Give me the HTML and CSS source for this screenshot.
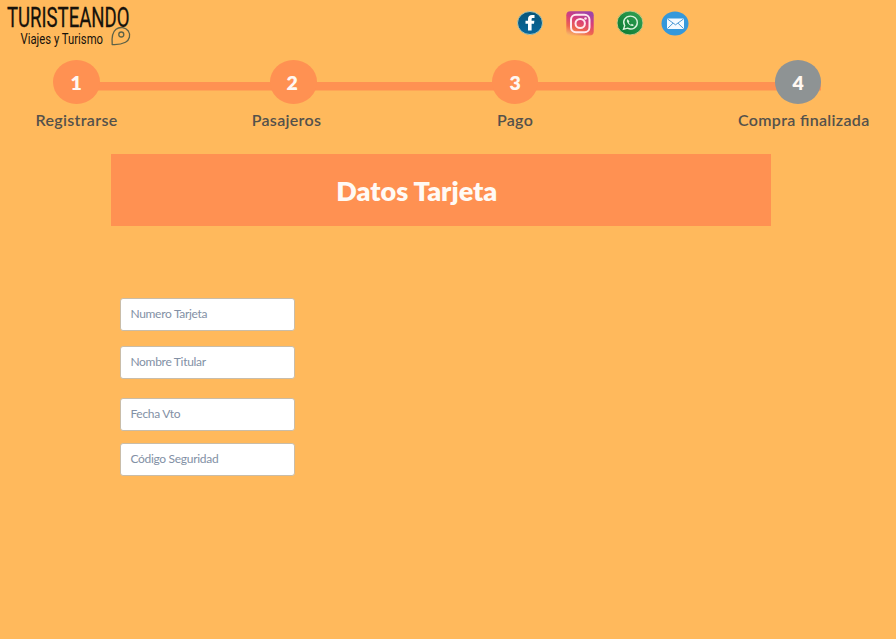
FILE: index.html
```html
<!DOCTYPE html>
<html lang="es">
<head>
<meta charset="utf-8">
<title>Turisteando - Datos Tarjeta</title>
<link rel="stylesheet" href="styles.css">
</head>
<body>
<header class="header">
  <svg class="logo" width="140" height="52" viewBox="0 0 140 52" role="img" aria-label="Turisteando">
    <text class="logo-name" x="7" y="27.2" textLength="122.5" lengthAdjust="spacingAndGlyphs">TURISTEANDO</text>
    <text class="logo-sub" x="20.5" y="43.5" textLength="82.5" lengthAdjust="spacingAndGlyphs">Viajes y Turismo</text>
    <g fill="none" stroke="#5c6247" stroke-width="1.3">
      <path d="M112.200 44.500C111.500 37 112.500 32 116 29.200C120 26.300 125.500 27.200 128.300 31C131 35 129.500 40 125.500 42.200C122.500 43.800 117 44.800 112.200 44.500Z"/>
      <circle cx="121.300" cy="34.500" r="2.500"/>
    </g>
  </svg>
  <nav class="social">
    <svg width="26" height="24" viewBox="0 0 26 24">
      <defs><linearGradient id="fb" x2="0" y2="1"><stop offset="0" stop-color="#075579"/><stop offset="1" stop-color="#08679d"/></linearGradient></defs>
      <ellipse cx="13" cy="12" rx="12.500" ry="11.500" fill="url(#fb)" stroke="#b9ceb5" stroke-width=".9"/>
      <path d="M11 19.500V12.800H8.500V9.700H11V8C11 5.200 12.700 4 15 4H17.500V7H16C14.900 7 14.600 7.500 14.600 8.400V9.700H17.400L17 12.800H14.600V19.500Z" fill="#fff"/>
    </svg>
    <svg width="28" height="25" viewBox="0 0 28 25">
      <defs>
        <linearGradient id="igbase" x1=".2" y1="1" x2=".6" y2="0"><stop offset="0" stop-color="#f8b365"/><stop offset=".3" stop-color="#ee654f"/><stop offset=".65" stop-color="#d83d79"/><stop offset="1" stop-color="#a044a8"/></linearGradient>
      </defs>
      <rect x=".3" y=".3" width="27.400" height="24.200" rx="4" fill="url(#igbase)"/>
      <g fill="none" stroke="#ffe9ee" stroke-width="2"><rect x="5" y="3.700" width="18.500" height="17.500" rx="5"/><ellipse cx="14.200" cy="12.500" rx="4.700" ry="4.500"/></g>
      <circle cx="19.500" cy="7.500" r="1.300" fill="#ffe9ee"/>
    </svg>
    <svg width="28" height="26" viewBox="0 0 28 26">
      <defs><linearGradient id="wa" x1="1" x2="0" y2="1"><stop offset="0" stop-color="#35a457"/><stop offset="1" stop-color="#07762f"/></linearGradient></defs>
      <ellipse cx="14" cy="13" rx="13" ry="12" fill="url(#wa)" stroke="#c7c784" stroke-width="1"/>
      <path d="M7.500 19.300L8.700 15.600C5.900 11 9.300 6.100 14.500 6.100C18.500 6.100 21.300 9 21.300 12.500C21.300 17.500 16.300 20.500 11.500 18.200Z" fill="none" stroke="#d9f2dc" stroke-width="1.400"/>
      <path d="M11.800 9.300C10.200 10 10.900 12.300 12.500 14C14.300 15.900 17 16.900 17.800 14.900L15.900 13.800L14.900 14.700C13.800 14.200 13.200 13.500 12.800 12.500L13.400 11.500Z" fill="#d9f2dc"/>
    </svg>
    <svg width="28" height="25" viewBox="0 0 28 25">
      <ellipse cx="14" cy="12.500" rx="13.500" ry="12" fill="#3498db"/>
      <rect x="6" y="7.500" width="17" height="10.500" rx="1" fill="#f4faff"/>
      <path d="M6.500 8L14.500 13.800L22.500 8M6.500 17.500L12 12.200M22.500 17.500L17 12.200" fill="none" stroke="#4b99d5" stroke-width="1"/>
    </svg>
  </nav>
</header>

<section class="stepper">
  <div class="track">
    <span class="dot">1</span>
    <span class="dot shifted">2</span>
    <span class="dot">3</span>
    <span class="dot pending">4</span>
  </div>
  <div class="labels">
    <span>Registrarse</span>
    <span>Pasajeros</span>
    <span>Pago</span>
    <span>Compra finalizada</span>
  </div>
</section>

<main class="content">
  <h1 class="title">Datos Tarjeta</h1>
  <form class="form">
    <input class="field" type="text" placeholder="Numero Tarjeta">
    <input class="field holder" type="text" placeholder="Nombre Titular">
    <input class="field expiry" type="text" placeholder="Fecha Vto">
    <input class="field code" type="text" placeholder="Código Seguridad">
  </form>
</main>
</body>
</html>
```

FILE: styles.css
```css
* {
  box-sizing: border-box;
}

body {
  margin: 0;
  min-height: 639px;
  background: #ffb95c;
  font-family: Lato, "Liberation Sans", sans-serif;
}

.header {
  display: flex;
  height: 60px;
}

.logo {
  display: block;
  overflow: visible;
  fill: #17120b;
  font-family: Roboto, sans-serif;
}

.logo-name {
  font-size: 28px;
  stroke: #17120b;
  stroke-width: 0.3px;
}

.logo-sub {
  font-size: 14.5px;
}

.social {
  display: flex;
  align-items: center;
  height: 46px;
  margin-left: 377px;
}

.social svg:nth-child(2) {
  margin-left: 23px;
}

.social svg:nth-child(3) {
  margin-left: 22px;
}

.social svg:nth-child(4) {
  margin-left: 17px;
}

.track {
  display: grid;
  grid-template-columns: 217.4px 221.6px 283px 47px;
  width: 769px;
  margin-left: 53px;
  background: linear-gradient(#ff9152, #ff9152) 20px 22px / 748px 8.5px no-repeat;
}

.dot {
  display: flex;
  align-items: center;
  justify-content: center;
  width: 46.5px;
  height: 44px;
  border-radius: 50%;
  background: #ff9152;
  color: #fff8f2;
  font-size: 19.5px;
  font-weight: 800;
}

.shifted {
  padding-right: 3px;
}

.pending {
  background: #8e9394;
}

.labels {
  display: grid;
  grid-template-columns: 153px 267px 190px 1fr;
  width: 896px;
  padding-right: 26.5px;
  justify-items: center;
  margin-top: 6px;
  color: #54514b;
  font-size: 16px;
  font-weight: 600;
  line-height: 20px;
  letter-spacing: 0.32px;
  font-feature-settings: "liga" 1;
  white-space: nowrap;
}

.labels span:last-child {
  justify-self: end;
}

.content {
  width: 661px;
  margin: 24px 0 0 110px;
}

.title {
  height: 72px;
  margin: 0 0 0 0.6px;
  padding-right: 48px;
  background: #ff9152;
  color: #fffaf5;
  font-size: 27px;
  font-weight: 800;
  line-height: 74px;
  text-align: center;
}

.form {
  display: flex;
  flex-direction: column;
  align-items: flex-start;
  padding: 72px 0 0 10px;
}

.field {
  width: 175px;
  height: 33px;
  padding: 0 9px 2px 9.4px;
  border: 1px solid #c9bda9;
  border-radius: 3px;
  background: #fff;
  font-family: inherit;
  font-size: 12px;
  letter-spacing: -0.3px;
}

.field::placeholder {
  color: #8290a5;
  opacity: 1;
}

.holder {
  margin-top: 15px;
}

.expiry {
  margin-top: 19px;
}

.code {
  margin-top: 12px;
}
```
